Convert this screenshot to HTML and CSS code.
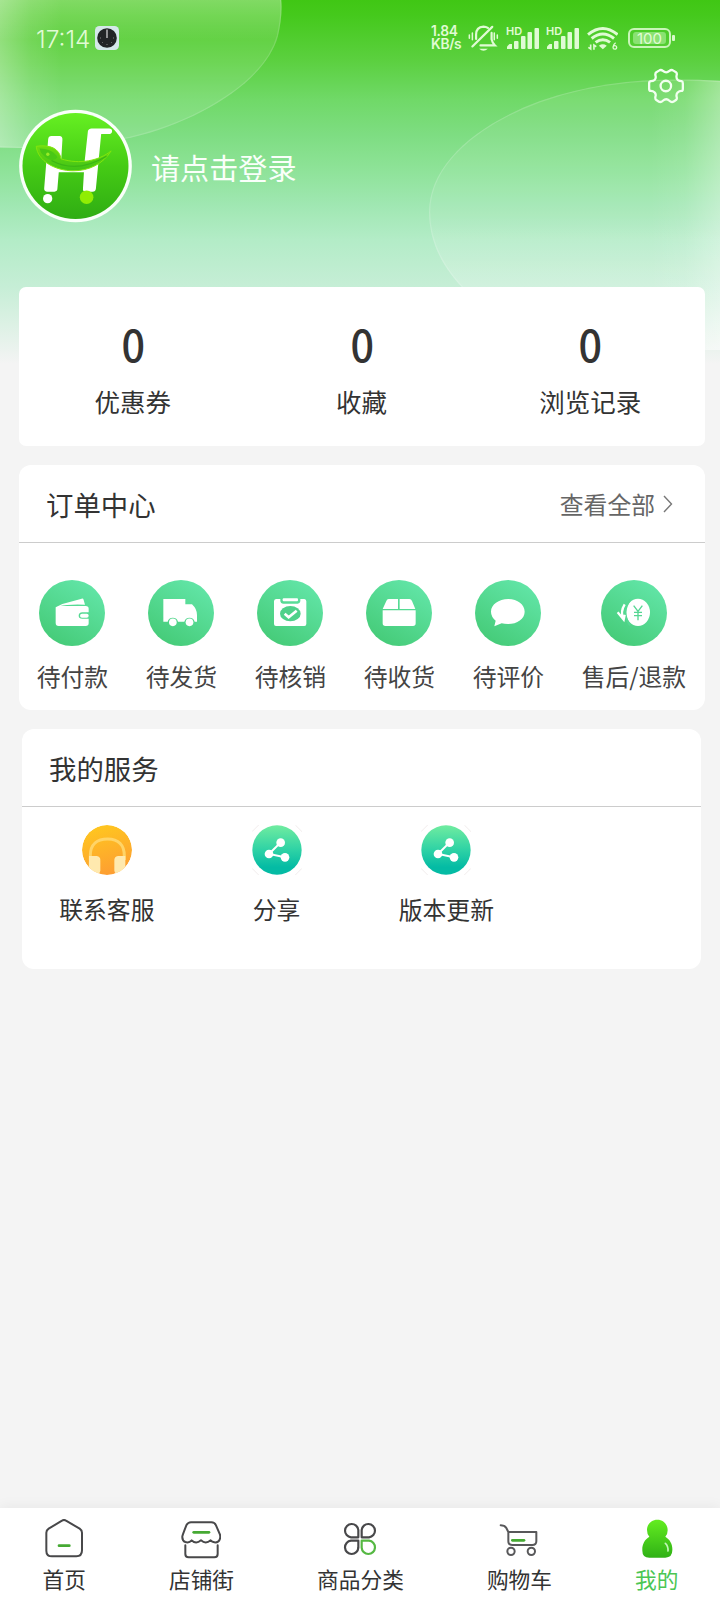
FILE: index.html
```html
<!DOCTYPE html>
<html lang="zh-CN">
<head>
<meta charset="utf-8">
<title>我的</title>
<link rel="stylesheet" href="styles.css">
</head>
<body>
<div class="page">
  <svg class="backdrop" viewBox="0 0 720 370" aria-hidden="true">
    <defs>
      <linearGradient id="glowLeft"><stop offset="0" stop-color="#fff" stop-opacity=".3"/><stop offset=".5" stop-color="#fff" stop-opacity=".1"/><stop offset="1" stop-color="#fff" stop-opacity="0"/></linearGradient>
      <linearGradient id="glowTop" x1="0" y1="0" x2="0" y2="1"><stop offset="0" stop-color="#fff" stop-opacity=".26"/><stop offset="1" stop-color="#fff" stop-opacity="0"/></linearGradient>
      <linearGradient id="glowRight"><stop offset="0" stop-color="#fff" stop-opacity="0"/><stop offset=".5" stop-color="#fff" stop-opacity=".08"/><stop offset="1" stop-color="#fff" stop-opacity=".32"/></linearGradient>
      <linearGradient id="glowBottom" x1="0" y1="0" x2="0" y2="1"><stop offset="0" stop-color="#fff" stop-opacity="0"/><stop offset="1" stop-color="#fff" stop-opacity=".26"/></linearGradient>
      <clipPath id="blobA"><path d="M0-2H281Q283 14 278 36C266 80 202 121 130 138Q65 150 0 147.500Z"/></clipPath>
      <clipPath id="blobB"><path d="M560 350C500 325 429 280 429 212C429 165 475 125 540 101C600 80 660 77 722 81V350Z"/></clipPath>
    </defs>
    <g clip-path="url(#blobA)">
      <rect width="300" height="150" fill="#fff" fill-opacity=".11"/>
      <rect width="62" height="150" fill="url(#glowLeft)"/>
      <rect width="300" height="40" fill="url(#glowTop)"/>
      <path d="M281-2Q283 14 278 36C266 80 202 121 130 138Q65 150 0 147.500" fill="none" stroke="#fff" stroke-opacity=".14" stroke-width="2.500"/>
    </g>
    <g clip-path="url(#blobB)">
      <rect x="420" y="70" width="300" height="282" fill="#fff" fill-opacity=".08"/>
      <rect x="650" y="70" width="70" height="282" fill="url(#glowRight)"/>
      <rect x="420" y="215" width="300" height="135" fill="url(#glowBottom)"/>
      <path d="M560 350C500 325 429 280 429 212C429 165 475 125 540 101C600 80 660 77 722 81" fill="none" stroke="#fff" stroke-opacity=".16" stroke-width="2.500"/>
    </g>
  </svg>

  <header class="status">
    <span class="time">17:14</span>
    <svg class="clock" viewBox="0 0 24 24"><rect width="24" height="24" rx="4.500" fill="#d5e8ea"/><circle cx="12" cy="12" r="9.800" fill="#222526"/><path d="M12 3.500v8.500" stroke="#eee" stroke-width="1.100"/><path d="M5 12h1M18 12h1M12 18v1M7 17l.7-.7M17 17l-.7-.7" stroke="#999" stroke-width=".8"/></svg>
    <span class="speed"><span>1.84</span><span>KB/s</span></span>
    <svg class="bell" viewBox="324 74 92 82" fill="none" stroke="#e0fbd4" stroke-width="6.500" stroke-linecap="round"><path d="M348 118V105Q348 82 370 81Q377 81 383 85M394 100V119Q396 129 404 137H361M337 140L396 82"/><path d="M328 106v10M337 100v20M402 100v20M411 106v10" stroke-width="4.500"/><path d="M357 147h26q-13 12-26 0" fill="#e0fbd4" stroke="none"/></svg>
    <span class="signal"><small>HD</small><svg viewBox="0 0 32 21" fill="#e0fbd4"><path d="M0 21V18.500L2.500 16H5V21Z"/><rect x="7" y="13" width="4.500" height="8" rx="1"/><rect x="14" y="8" width="4.500" height="13" rx="1"/><rect x="20.500" y="4" width="4.500" height="17" rx="1"/><rect x="27.500" width="4.500" height="21" rx="1"/></svg></span>
    <span class="signal"><small>HD</small><svg viewBox="0 0 32 21" fill="#e0fbd4"><path d="M0 21V18.500L2.500 16H5V21Z"/><rect x="7" y="13" width="4.500" height="8" rx="1"/><rect x="14" y="8" width="4.500" height="13" rx="1"/><rect x="20.500" y="4" width="4.500" height="17" rx="1"/><rect x="27.500" width="4.500" height="21" rx="1"/></svg></span>
    <svg class="wifi" viewBox="682 78 94 76" fill="none" stroke="#e0fbd4" stroke-width="9"><path d="M685 104Q730 67 775 104M696 116Q730 89 764 116M708 128Q730 111 752 128"/><path d="M718 138Q730 129 742 138L730 149Z" fill="#e0fbd4" stroke="none"/><path d="M693 134v14l-7-5M703 150v-14l7 5" stroke-width="5"/><path d="M769 129q-8 5-8 13M761 143a5 5 0 1 0 11 0a5 5 0 1 0-11 0" stroke-width="4"/></svg>
    <span class="battery"><b>100</b></span>
  </header>

  <div class="tools">
    <svg class="gear" viewBox="860 203 115 110" fill="none" stroke="#f2fff0" stroke-width="7" stroke-linejoin="round"><path d="M908 212Q902 207 896 211L888 216Q884 219 885 225Q888 234 883 239Q878 243 871 243Q866 244 866 250V267Q866 273 871 273Q878 273 883 278Q888 284 885 291Q884 298 888 301L896 306Q902 309 908 303Q918 294 928 303Q934 309 940 306L948 301Q952 298 950 291Q948 284 953 278Q958 273 965 273Q969 273 969 267V250Q969 244 965 243Q958 243 953 239Q948 234 950 225Q952 219 948 216L940 211Q934 207 928 212Q918 221 908 212Z"/><circle cx="917" cy="258" r="16"/></svg>
  </div>

  <section class="profile">
    <svg class="avatar" viewBox="26 26 341 343">
      <defs><linearGradient id="logoBg" x1="0" y1="0" x2="0" y2="1"><stop offset="0" stop-color="#66f022"/><stop offset=".5" stop-color="#45cb15"/><stop offset="1" stop-color="#2fad13"/></linearGradient>
      <linearGradient id="leaf" x1="0" y1="0" x2="0" y2="1"><stop offset="0" stop-color="#6fdc0f"/><stop offset="1" stop-color="#3fc317"/></linearGradient></defs>
      <circle cx="196.500" cy="197.500" r="170" fill="#fafffa"/>
      <circle cx="196.500" cy="197.500" r="160" fill="url(#logoBg)"/>
      <path d="M124 107H148Q158 108 157 118L152 203H222L234 92Q236 84 245 84H298Q307 84 307 92Q307 100 299 101H274L258 266Q257 275 248 275H226Q218 274 219 266L222 216H146L142 265Q142 275 133 275H110Q101 274 102 265L114 117Q115 107 124 107Z" fill="#fff"/>
      <circle cx="112.500" cy="296" r="14" fill="#fff"/><circle cx="230" cy="292" r="20.500" fill="#90ed04"/>
      <path d="M78 138C120 132 148 145 153 176C210 194 268 181 304 152C280 191 237 212 190 212C135 212 82 182 78 138Z" fill="url(#leaf)" stroke="#82e50d" stroke-width="3"/>
      <path d="M88 145C116 146 133 156 142 171Q134 184 114 176Q92 165 88 145Z" fill="#49c815"/>
      <path d="M124 181Q200 222 290 168" fill="none" stroke="#3bb616" stroke-width="4"/><circle cx="113" cy="162" r="5" fill="#99ec26"/>
    </svg>
    <a class="login">请点击登录</a>
  </section>

  <section class="card stats">
    <div class="stat"><b>0</b><span>优惠券</span></div>
    <div class="stat"><b>0</b><span>收藏</span></div>
    <div class="stat"><b>0</b><span>浏览记录</span></div>
  </section>

  <section class="card orders">
    <div class="card-head"><h2>订单中心</h2><a class="more">查看全部<svg viewBox="0 0 10 18"><path d="M1 1l7.500 8L1 17" fill="none" stroke="#777" stroke-width="1.400"/></svg></a></div>
    <div class="order-row">
      <div class="order"><svg viewBox="0 0 198 198"><defs><linearGradient id="mint" x1=".8" y1="0" x2=".2" y2="1"><stop offset="0" stop-color="#63e6a9"/><stop offset="1" stop-color="#44ca76"/></linearGradient></defs><circle cx="99" cy="99" r="99" fill="url(#mint)"/><path d="M50 82L70 72 128 56Q133 55 134 60L138 74Q85 72 61 79Q53 81 50 88ZM61 78H140Q149 78 149 86V97H130Q119 98 119 107Q119 116 130 116H149V130Q149 138 140 138H59Q50 138 50 129V88Q50 79 61 78Z" fill="#fff"/><rect x="123" y="101" width="26" height="12" rx="6" fill="#fff"/></svg><span>待付款</span></div>
      <div class="order"><svg viewBox="0 0 198 198"><circle cx="99" cy="99" r="99" fill="url(#mint)"/><path d="M46 57H112V73H132Q147 87 147 105V125H140A16 16 0 0 0 109 125H90A16 16 0 0 0 59 125H46Z" fill="#fff"/><circle cx="74.500" cy="127" r="11.500" fill="#fff"/><circle cx="124.500" cy="127" r="11.500" fill="#fff"/></svg><span>待发货</span></div>
      <div class="order"><svg viewBox="0 0 198 198"><circle cx="99" cy="99" r="99" fill="url(#mint)"/><path d="M57 57H70V64Q71 71 78 71H122Q129 71 130 64V57H142Q148 58 148 64V132Q148 138 142 138H57Q51 138 51 132V64Q51 58 57 57Z" fill="#fff"/><rect x="77" y="55" width="46" height="9" rx="3" fill="#fff"/><ellipse cx="100" cy="101" rx="31" ry="23" fill="#4fd18a"/><path d="M83 101l12 11 24-20" fill="none" stroke="#fff" stroke-width="8"/></svg><span>待核销</span></div>
      <div class="order"><svg viewBox="0 0 198 198"><circle cx="99" cy="99" r="99" fill="url(#mint)"/><path d="M68 57H96V87H50L61 63Q63 57 68 57ZM101 57H130Q136 57 138 63L148 87H101ZM50 91H149V130Q149 138 141 138H58Q50 138 50 130Z" fill="#fff"/></svg><span>待收货</span></div>
      <div class="order"><svg viewBox="0 0 198 198"><circle cx="99" cy="99" r="99" fill="url(#mint)"/><path d="M100 57C128 57 149 74 149 95S127 132 99 132Q88 132 80 130L58 139 62 122Q48 110 48 95C48 74 71 57 100 57Z" fill="#fff"/></svg><span>待评价</span></div>
      <div class="order"><svg viewBox="0 0 198 198"><circle cx="99" cy="99" r="99" fill="url(#mint)"/><ellipse cx="111" cy="97" rx="36" ry="41" fill="#fff"/><path d="M88 59Q59 97 87 136" fill="none" stroke="#56d993" stroke-width="6"/><path d="M71 73Q58 94 66 117M50 97L68 119L71 104" fill="none" stroke="#fff" stroke-width="7"/><path d="M98 77l13 17 13-17M111 94v27M99 97h24M99 107h24" fill="none" stroke="#55d692" stroke-width="4"/></svg><span>售后/退款</span></div>
    </div>
  </section>

  <section class="card services">
    <div class="card-head"><h2>我的服务</h2></div>
    <div class="service-row">
      <div class="service"><svg viewBox="0 0 150 150"><defs><linearGradient id="amber" x1=".3" y1="0" x2=".6" y2="1"><stop offset="0" stop-color="#ffc71f"/><stop offset="1" stop-color="#fd9d32"/></linearGradient><clipPath id="disc"><circle cx="75" cy="75" r="75"/></clipPath></defs><g clip-path="url(#disc)"><circle cx="75" cy="75" r="75" fill="url(#amber)"/><path d="M25 105V91C25 58 45 42 77 42S127 60 127 93V105" fill="none" stroke="#ffd467" stroke-width="9"/><path d="M21 93H44Q56 95 55 107V137Q53 147 43 149H20ZM130 93H108Q96 95 97 108V137Q99 147 110 149H130Z" fill="#ffe9ae"/></g></svg><span>联系客服</span></div>
      <div class="service"><svg viewBox="0 0 150 150"><defs><linearGradient id="teal" x1="0" y1="0" x2="0" y2="1"><stop offset="0" stop-color="#70eca0"/><stop offset=".5" stop-color="#2ed2a5"/><stop offset=".85" stop-color="#04bba4"/></linearGradient></defs><path d="M0 20L20 0M130 0l20 20M0 130l20 20M130 150l20-20" stroke="#f1ecec" stroke-width="3"/><circle cx="75" cy="75" r="74" fill="url(#teal)"/><path d="M86 52L51 87 99 97" fill="none" stroke="#fff" stroke-width="6"/><g fill="#fff"><circle cx="86" cy="53" r="13"/><circle cx="51" cy="87" r="13"/><circle cx="99" cy="97" r="13"/></g></svg><span>分享</span></div>
      <div class="service"><svg viewBox="0 0 150 150"><path d="M0 20L20 0M130 0l20 20M0 130l20 20M130 150l20-20" stroke="#f1ecec" stroke-width="3"/><circle cx="75" cy="75" r="74" fill="url(#teal)"/><path d="M86 52L51 87 99 97" fill="none" stroke="#fff" stroke-width="6"/><g fill="#fff"><circle cx="86" cy="53" r="13"/><circle cx="51" cy="87" r="13"/><circle cx="99" cy="97" r="13"/></g></svg><span>版本更新</span></div>
    </div>
  </section>

  <nav class="tabs">
    <a class="tab"><svg viewBox="0 0 120 120" fill="none" stroke="#48484a" stroke-width="6" stroke-linejoin="round"><path d="M54 5Q60 1 66 5L107 29Q114 34 114 41V94Q114 112 97 112H24Q7 112 7 95V41Q7 34 14 29Z"/><path d="M45 80h31" stroke="#46a933" stroke-width="8" stroke-linecap="round"/></svg><span>首页</span></a>
    <a class="tab"><svg viewBox="545 72 120 120" fill="none" stroke="#48484a" stroke-width="6" stroke-linejoin="round" stroke-linecap="round"><path d="M575 82H636Q646 82 650 91L662 119Q664 127 661 134Q657 144 645 142Q638 141 634 136Q619 149 605 136Q590 149 577 136Q569 145 558 141Q548 137 549 124Q550 119 561 91Q566 82 575 82ZM558 151V177Q558 187 568 187H645Q655 187 655 177V151"/><path d="M583 112h46" stroke="#46a933" stroke-width="8"/></svg><span>店铺街</span></a>
    <a class="tab"><svg viewBox="0 0 120 120" fill="none" stroke="#48484a" stroke-width="6.500" stroke-linejoin="round"><path d="M55 55H33A20 20 0 1 1 55 33ZM65 55H87A20 20 0 1 0 65 33ZM55 65V86A20 20 0 1 1 33 65Z"/><path d="M65 65V86A20 20 0 1 0 87 65Z" stroke="#55b842"/></svg><span>商品分类</span></a>
    <a class="tab"><svg viewBox="418 72 120 120" fill="none" stroke="#58585a" stroke-width="6" stroke-linecap="round" stroke-linejoin="round"><path d="M423 91Q435 91 440 99L446 111V139Q446 150 458 150H518Q530 150 530 139V111H446"/><circle cx="454" cy="169" r="11"/><circle cx="515" cy="169" r="11"/><path d="M458 136h35" stroke="#46a933" stroke-width="8"/></svg><span>购物车</span></a>
    <a class="tab active"><svg viewBox="832 72 120 120"><defs><linearGradient id="person" x1="0" y1="0" x2="0" y2="1"><stop offset="0" stop-color="#63ed20"/><stop offset="1" stop-color="#30b116"/></linearGradient></defs><path d="M893 74C912 74 924 89 924 106Q924 119 917 125C932 134 939 149 938 166Q938 188 917 188H869Q848 188 848 167C847 149 854 134 869 125Q862 118 862 105C862 88 875 74 893 74Z" fill="url(#person)"/><path d="M917 145Q926 153 925 168" fill="none" stroke="#c2f6b8" stroke-width="5" stroke-linecap="round"/></svg><span>我的</span></a>
  </nav>
</div>
</body>
</html>
```

FILE: styles.css
```css
* { box-sizing: border-box; }
body {
  margin: 0;
  font-family: "Noto Sans CJK SC", sans-serif;
  font-weight: 400;
  color: #333;
}
svg { display: block; flex: none; }
.page {
  position: relative;
  display: flex;
  flex-direction: column;
  width: 720px;
  height: 1600px;
  overflow: hidden;
  background: #f4f4f4 linear-gradient(#40c714 0, #45c91c 15px, #5bd03f 60px, #70d968 100px, #7edd82 135px, #8ce295 165px, #a0e7b2 205px, #b3ecc7 240px, #c6eed6 287px, #f4f4f4 364px) no-repeat;
}
.backdrop { position: absolute; left: 0; top: 0; width: 720px; height: 370px; }
.status, .tools, .profile, .card { position: relative; }

.status {
  display: flex;
  align-items: center;
  height: 68px;
  padding: 8px 0 0 36px;
  color: #e0fbd4;
}
.time { width: 59px; padding-top: 2px; font: 300 24.5px/30px Inter, sans-serif; white-space: nowrap; }
.clock { width: 24px; height: 24px; }
.speed {
  display: flex;
  flex-direction: column;
  width: 36px;
  margin-left: 312px;
  font: 600 13.8px/13px Inter, sans-serif;
  letter-spacing: -.3px;
  white-space: nowrap;
}
.bell { width: 31px; height: 28px; margin-left: 1px; }
.signal { position: relative; display: flex; align-items: flex-end; width: 32px; height: 22px; margin-left: 8px; }
.signal svg { width: 32px; height: 21px; }
.signal small { position: absolute; left: -1px; top: -1px; font: 600 11px/10px Inter, sans-serif; }
.wifi { width: 31px; height: 25px; margin-left: 8px; }
.battery {
  position: relative;
  display: flex;
  width: 43px;
  height: 20px;
  margin-left: 10px;
  padding: 2px 3px;
  border: 2px solid #c9f5b9;
  border-radius: 6px;
}
.battery b {
  flex: 1;
  border-radius: 3px;
  background: #8ae272;
  font: 400 15px/13px Inter, sans-serif;
  text-align: center;
}
.battery::after {
  content: "";
  position: absolute;
  right: -6px;
  top: 5px;
  width: 3px;
  height: 6px;
  border-radius: 1px;
  background: #d9f9cc;
}

.tools { display: flex; justify-content: flex-end; height: 41px; padding-right: 35px; }
.gear { width: 38px; height: 36px; }
.profile { display: flex; align-items: center; height: 178px; padding: 0 0 64px 19px; }
.avatar { width: 113px; height: 114px; }
.login { margin: 2px 0 0 19px; font-size: 29.1px; line-height: 40px; color: #fafffa; }

.card { margin: 0 15px 19px 19px; border-radius: 12px; background: #fff; }
.stats { display: grid; grid-template-columns: repeat(3, 1fr); height: 159px; margin-bottom: 19px; border-radius: 7px; }
.stat { display: flex; flex-direction: column; align-items: center; padding-top: 32px; font-size: 25.5px; }
.stat b { font-size: 43.5px; font-weight: 500; line-height: 50px; transform: scaleX(.95); }
.stat span { margin: 13px 1px 0 0; line-height: 38px; }

.card-head {
  display: flex;
  align-items: center;
  justify-content: space-between;
  height: 78px;
  padding: 0 32px 0 27px;
  border-bottom: 1px solid #ccc;
}
.card-head h2 { margin: 0; font-size: 27.4px; font-weight: 400; }
.more { display: flex; align-items: center; gap: 8px; font-size: 23.8px; color: #666; }
.more svg { width: 10px; height: 18px; }
.orders { height: 245px; }
.order-row { display: flex; justify-content: space-around; margin: 0 0 0 -1px; padding: 37px 0 0; }
.order { display: flex; flex-direction: column; align-items: center; font-size: 23.8px; color: #444; }
.order svg { width: 66px; height: 66px; }
.order span { margin-top: 12px; line-height: 36px; white-space: nowrap; }
.services { height: 240px; margin: 0 19px 0 22px; }
.service-row { display: grid; grid-template-columns: repeat(4, 1fr); padding-top: 18px; }
.service { display: flex; flex-direction: column; align-items: center; font-size: 23.8px; }
.service svg { width: 50px; height: 50px; }
.service span { margin-top: 16px; line-height: 36px; }

.tabs {
  display: flex;
  justify-content: space-around;
  height: 92px;
  margin-top: auto;
  padding: 11px 0 0 1px;
  background: #fff;
  box-shadow: 0 -2px 12px rgba(0, 0, 0, .05);
}
.tab { display: flex; flex-direction: column; align-items: center; font-size: 21.7px; }
.tab svg { width: 40px; height: 40px; }
.tab span { margin-top: 4px; line-height: 32px; }
.active { color: #4bc653; }
```
